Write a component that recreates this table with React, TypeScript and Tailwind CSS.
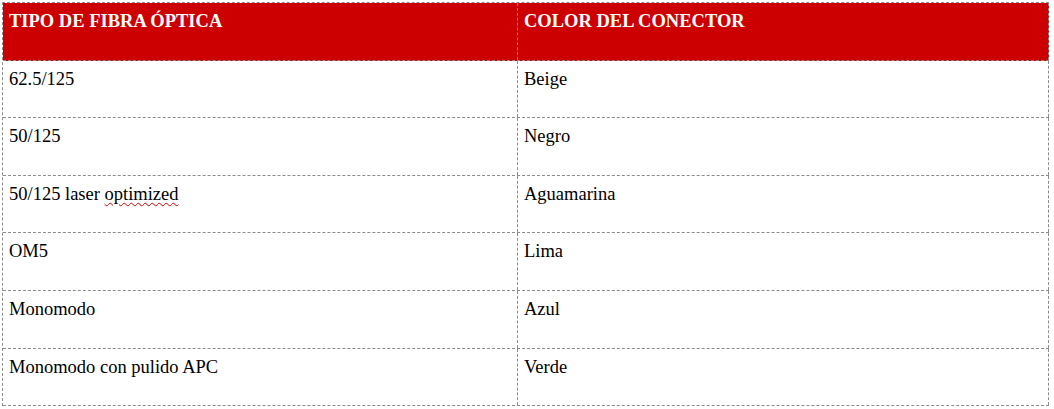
const rows: { tipo: React.ReactNode; color: string; h: string }[] = [
  { tipo: '62.5/125', color: 'Beige', h: 'h-[57px]' },
  { tipo: '50/125', color: 'Negro', h: 'h-[58px]' },
  {
    tipo: (
      <>
        50/125 laser{' '}
        <span className="underline decoration-wavy decoration-[#e00000] decoration-1 underline-offset-2">optimized</span>
      </>
    ),
    color: 'Aguamarina',
    h: 'h-[57px]',
  },
  { tipo: 'OM5', color: 'Lima', h: 'h-[58px]' },
  { tipo: 'Monomodo', color: 'Azul', h: 'h-[58px]' },
  { tipo: 'Monomodo con pulido APC', color: 'Verde', h: 'h-[57px]' },
];

export default function App() {
  return (
    <div className="w-[1054px] h-[409px] bg-white font-['Liberation_Serif','Times_New_Roman',serif] text-[18.5px] leading-[1.15] text-black">
      <div className="ml-[2px] mt-[2px] w-[1047px] border-t border-l border-dashed border-[#8c8c8c]">
        <div className="flex h-[58px] border-b border-dashed border-[#8c8c8c] bg-[#cc0000] font-bold text-white">
          <div className="w-[515px] border-r border-dashed border-[#8c8c8c] pl-[6px] pt-[8px]">TIPO DE FIBRA ÓPTICA</div>
          <div className="flex-1 border-r border-dashed border-[#8c8c8c] pl-[6px] pt-[8px]">COLOR DEL CONECTOR</div>
        </div>
        {rows.map((r) => (
          <div key={r.color} className={`flex border-b border-dashed border-[#8c8c8c] ${r.h}`}>
            <div className="w-[515px] border-r border-dashed border-[#8c8c8c] pl-[6px] pt-[8px]">{r.tipo}</div>
            <div className="flex-1 border-r border-dashed border-[#8c8c8c] pl-[6px] pt-[8px]">{r.color}</div>
          </div>
        ))}
      </div>
    </div>
  );
}
